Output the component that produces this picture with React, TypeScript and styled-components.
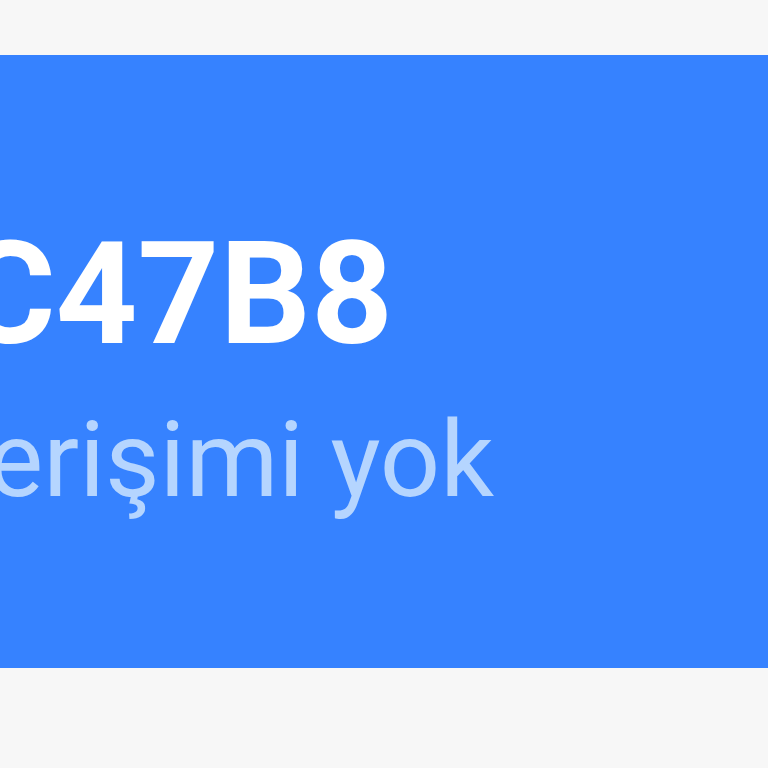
import styled, { createGlobalStyle } from "styled-components";

const GlobalStyle = createGlobalStyle`
  html, body {
    margin: 0;
    padding: 0;
    background: #f7f7f7;
  }
  body {
    font-family: Roboto, "Noto Sans", sans-serif;
    overflow: hidden;
  }
`;

const Page = styled.div`
  width: 768px;
  height: 768px;
  padding-top: 55px;
  box-sizing: border-box;
  overflow: hidden;
`;

const Card = styled.section`
  height: 613px;
  box-sizing: border-box;
  padding-top: 168px;
  background: #3682ff;
  overflow: hidden;
  display: flex;
  flex-direction: column;
  gap: 41px;
`;

const NetworkName = styled.h1`
  margin: 0 0 0 -38px;
  font-size: 143px;
  line-height: 1;
  font-weight: 700;
  color: #ffffff;
  white-space: nowrap;
`;

const Status = styled.p`
  margin: 0 0 0 -13px;
  font-size: 106px;
  line-height: 1;
  font-weight: 400;
  color: #b5d5ff;
  white-space: nowrap;
`;

export default function App() {
  return (
    <>
      <GlobalStyle />
      <Page>
        <Card>
          <NetworkName>C47B8</NetworkName>
          <Status>erişimi yok</Status>
        </Card>
      </Page>
    </>
  );
}
